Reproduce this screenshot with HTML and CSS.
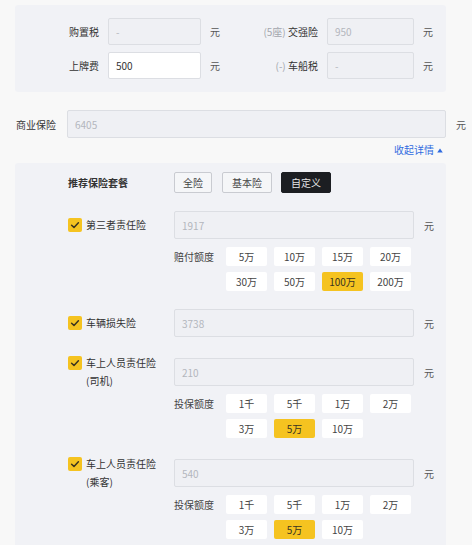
FILE: index.html
```html
<!DOCTYPE html>
<html lang="zh-CN">
<head>
<meta charset="utf-8">
<link rel="stylesheet" href="styles.css">
</head>
<body>
<div class="page">
  <div class="tax-panel">
    <div class="lbl">购置税</div>
    <div class="field">-</div>
    <div class="unit">元</div>
    <div class="lbl"><span class="hint">(5座)</span> 交强险</div>
    <div class="field">950</div>
    <div class="unit">元</div>

    <div class="lbl">上牌费</div>
    <div class="field field-white">500</div>
    <div class="unit">元</div>
    <div class="lbl"><span class="hint">(-)</span> 车船税</div>
    <div class="field">-</div>
    <div class="unit">元</div>
  </div>

  <div class="biz-row">
    <div class="biz-lbl">商业保险</div>
    <div class="field field-grow">6405</div>
    <div class="unit">元</div>
  </div>

  <div class="toggle-row">
    <span class="toggle">收起详情<svg class="tri" width="6" height="5" viewBox="0 0 6 5"><path d="M3 0.5 L5.8 4.5 L0.2 4.5 Z" fill="#2f6be0"/></svg></span>
  </div>

  <div class="detail-panel">
    <div class="pkg-row">
      <div class="pkg-lbl">推荐保险套餐</div>
      <div class="pkg-btns">
        <span class="pkg-btn">全险</span>
        <span class="pkg-btn pkg-wide">基本险</span>
        <span class="pkg-btn pkg-wide pkg-on">自定义</span>
      </div>
    </div>

    <div class="item">
      <div class="item-main">
        <div class="chk-lbl">
          <span class="chk"><svg width="14" height="14" viewBox="0 0 14 14"><path d="M3.6 7.2 L6 9.4 L10.4 4.8" fill="none" stroke="#3a3320" stroke-width="1.5" stroke-linecap="round" stroke-linejoin="round"/></svg></span>
          <span class="chk-text">第三者责任险</span>
        </div>
        <div class="field field-item">1917</div>
        <div class="unit">元</div>
      </div>
      <div class="opts">
        <div class="opt-lbl">赔付额度</div>
        <div class="opt-grid">
          <span class="opt">5万</span><span class="opt">10万</span><span class="opt">15万</span><span class="opt">20万</span>
          <span class="opt">30万</span><span class="opt">50万</span><span class="opt opt-on">100万</span><span class="opt">200万</span>
        </div>
      </div>
    </div>

    <div class="item">
      <div class="item-main">
        <div class="chk-lbl">
          <span class="chk"><svg width="14" height="14" viewBox="0 0 14 14"><path d="M3.6 7.2 L6 9.4 L10.4 4.8" fill="none" stroke="#3a3320" stroke-width="1.5" stroke-linecap="round" stroke-linejoin="round"/></svg></span>
          <span class="chk-text">车辆损失险</span>
        </div>
        <div class="field field-item">3738</div>
        <div class="unit">元</div>
      </div>
    </div>

    <div class="item item-tall">
      <div class="item-main">
        <div class="chk-lbl">
          <span class="chk"><svg width="14" height="14" viewBox="0 0 14 14"><path d="M3.6 7.2 L6 9.4 L10.4 4.8" fill="none" stroke="#3a3320" stroke-width="1.5" stroke-linecap="round" stroke-linejoin="round"/></svg></span>
          <span class="chk-text">车上人员责任险<br>(司机)</span>
        </div>
        <div class="field field-item">210</div>
        <div class="unit">元</div>
      </div>
      <div class="opts">
        <div class="opt-lbl">投保额度</div>
        <div class="opt-grid">
          <span class="opt">1千</span><span class="opt">5千</span><span class="opt">1万</span><span class="opt">2万</span>
          <span class="opt">3万</span><span class="opt opt-on">5万</span><span class="opt">10万</span>
        </div>
      </div>
    </div>

    <div class="item item-tall">
      <div class="item-main">
        <div class="chk-lbl">
          <span class="chk"><svg width="14" height="14" viewBox="0 0 14 14"><path d="M3.6 7.2 L6 9.4 L10.4 4.8" fill="none" stroke="#3a3320" stroke-width="1.5" stroke-linecap="round" stroke-linejoin="round"/></svg></span>
          <span class="chk-text">车上人员责任险<br>(乘客)</span>
        </div>
        <div class="field field-item">540</div>
        <div class="unit">元</div>
      </div>
      <div class="opts">
        <div class="opt-lbl">投保额度</div>
        <div class="opt-grid">
          <span class="opt">1千</span><span class="opt">5千</span><span class="opt">1万</span><span class="opt">2万</span>
          <span class="opt">3万</span><span class="opt opt-on">5万</span><span class="opt">10万</span>
        </div>
      </div>
    </div>
  </div>
</div>
</body>
</html>
```

FILE: styles.css
```css
* { box-sizing: border-box; }
html, body { margin: 0; padding: 0; }
body {
  background: #f8f8f8;
  font-family: "Noto Sans CJK SC", "Noto Sans", sans-serif;
  font-size: 10px;
  color: #333;
  overflow: hidden;
}
.page { width: 472px; height: 545px; overflow: hidden; padding-top: 5px; }

.tax-panel {
  margin: 0 26px 0 15px;
  background: #f1f2f6;
  border-radius: 3px;
  padding: 13px 0;
  display: grid;
  grid-template-columns: 84px 93px 12px 87px 87px 12px;
  grid-auto-rows: 27px;
  column-gap: 9px;
  row-gap: 7px;
  align-items: center;
}
.lbl { text-align: right; color: #333; white-space: nowrap; }
.hint { color: #a3a6ad; }
.unit { color: #555; }

.field {
  height: 100%;
  display: flex;
  align-items: center;
  padding: 0 7px;
  border: 1px solid #dcdee3;
  border-radius: 2px;
  background: #eff0f4;
  color: #b3b6bd;
}
.field-white { background: #fff; color: #333; }

.biz-row {
  margin-top: 18px;
  height: 28px;
  display: flex;
  align-items: center;
  padding: 0 6px 0 16px;
  gap: 10px;
}
.biz-lbl { width: 41px; color: #333; white-space: nowrap; }
.field-grow { flex: 1; }

.toggle-row {
  margin-top: 6px;
  height: 12px;
  display: flex;
  justify-content: flex-end;
  padding-right: 29px;
  line-height: 12px;
}
.toggle { color: #2f6be0; display: inline-flex; align-items: center; gap: 3px; }
.tri { display: block; }

.detail-panel {
  margin: 7px 26px 0 15px;
  background: #f1f2f6;
  border-radius: 3px;
  padding: 9px 0 20px 53px;
  display: flex;
  flex-direction: column;
  gap: 18px;
}
.pkg-row { display: flex; align-items: center; height: 21px; }
.pkg-lbl { width: 106px; font-weight: bold; color: #333; }
.pkg-btns { display: flex; gap: 9px; }
.pkg-btns .pkg-btn:first-child { margin-right: 1px; }
.pkg-btn {
  height: 21px;
  line-height: 19px;
  padding: 0 8px;
  border: 1px solid #c9cbd1;
  border-radius: 2px;
  background: #f5f6f8;
  color: #444;
}
.pkg-wide { padding: 0 9px; }
.pkg-on { background: #1c1e22; border-color: #1c1e22; color: #e6e6e6; }

.item { display: flex; flex-direction: column; }
.item-tall { margin-top: 3px; }
.item-main { display: flex; align-items: center; height: 28px; }
.chk-lbl { width: 106px; flex: none; display: flex; align-items: flex-start; gap: 4px; line-height: 18px; }
.chk {
  width: 14px; height: 14px; margin-top: 2px;
  background: #f5c320;
  border-radius: 2px;
  flex: none;
  display: block;
}
.chk svg { display: block; }
.chk-text { color: #333; }
.field-item { width: 240px; height: 28px; flex: none; }
.item-main .unit { margin-left: 10px; }

.opts { display: flex; margin: 8px 0 0 106px; }
.opt-lbl { width: 52px; height: 19px; line-height: 19px; color: #444; }
.opt-grid {
  display: grid;
  grid-template-columns: repeat(4, 41px);
  grid-auto-rows: 19px;
  column-gap: 7px;
  row-gap: 6px;
}
.opt {
  background: #fff;
  border-radius: 2px;
  text-align: center;
  line-height: 19px;
  color: #444;
}
.opt-on { background: #f5c320; color: #3a3320; }
```
